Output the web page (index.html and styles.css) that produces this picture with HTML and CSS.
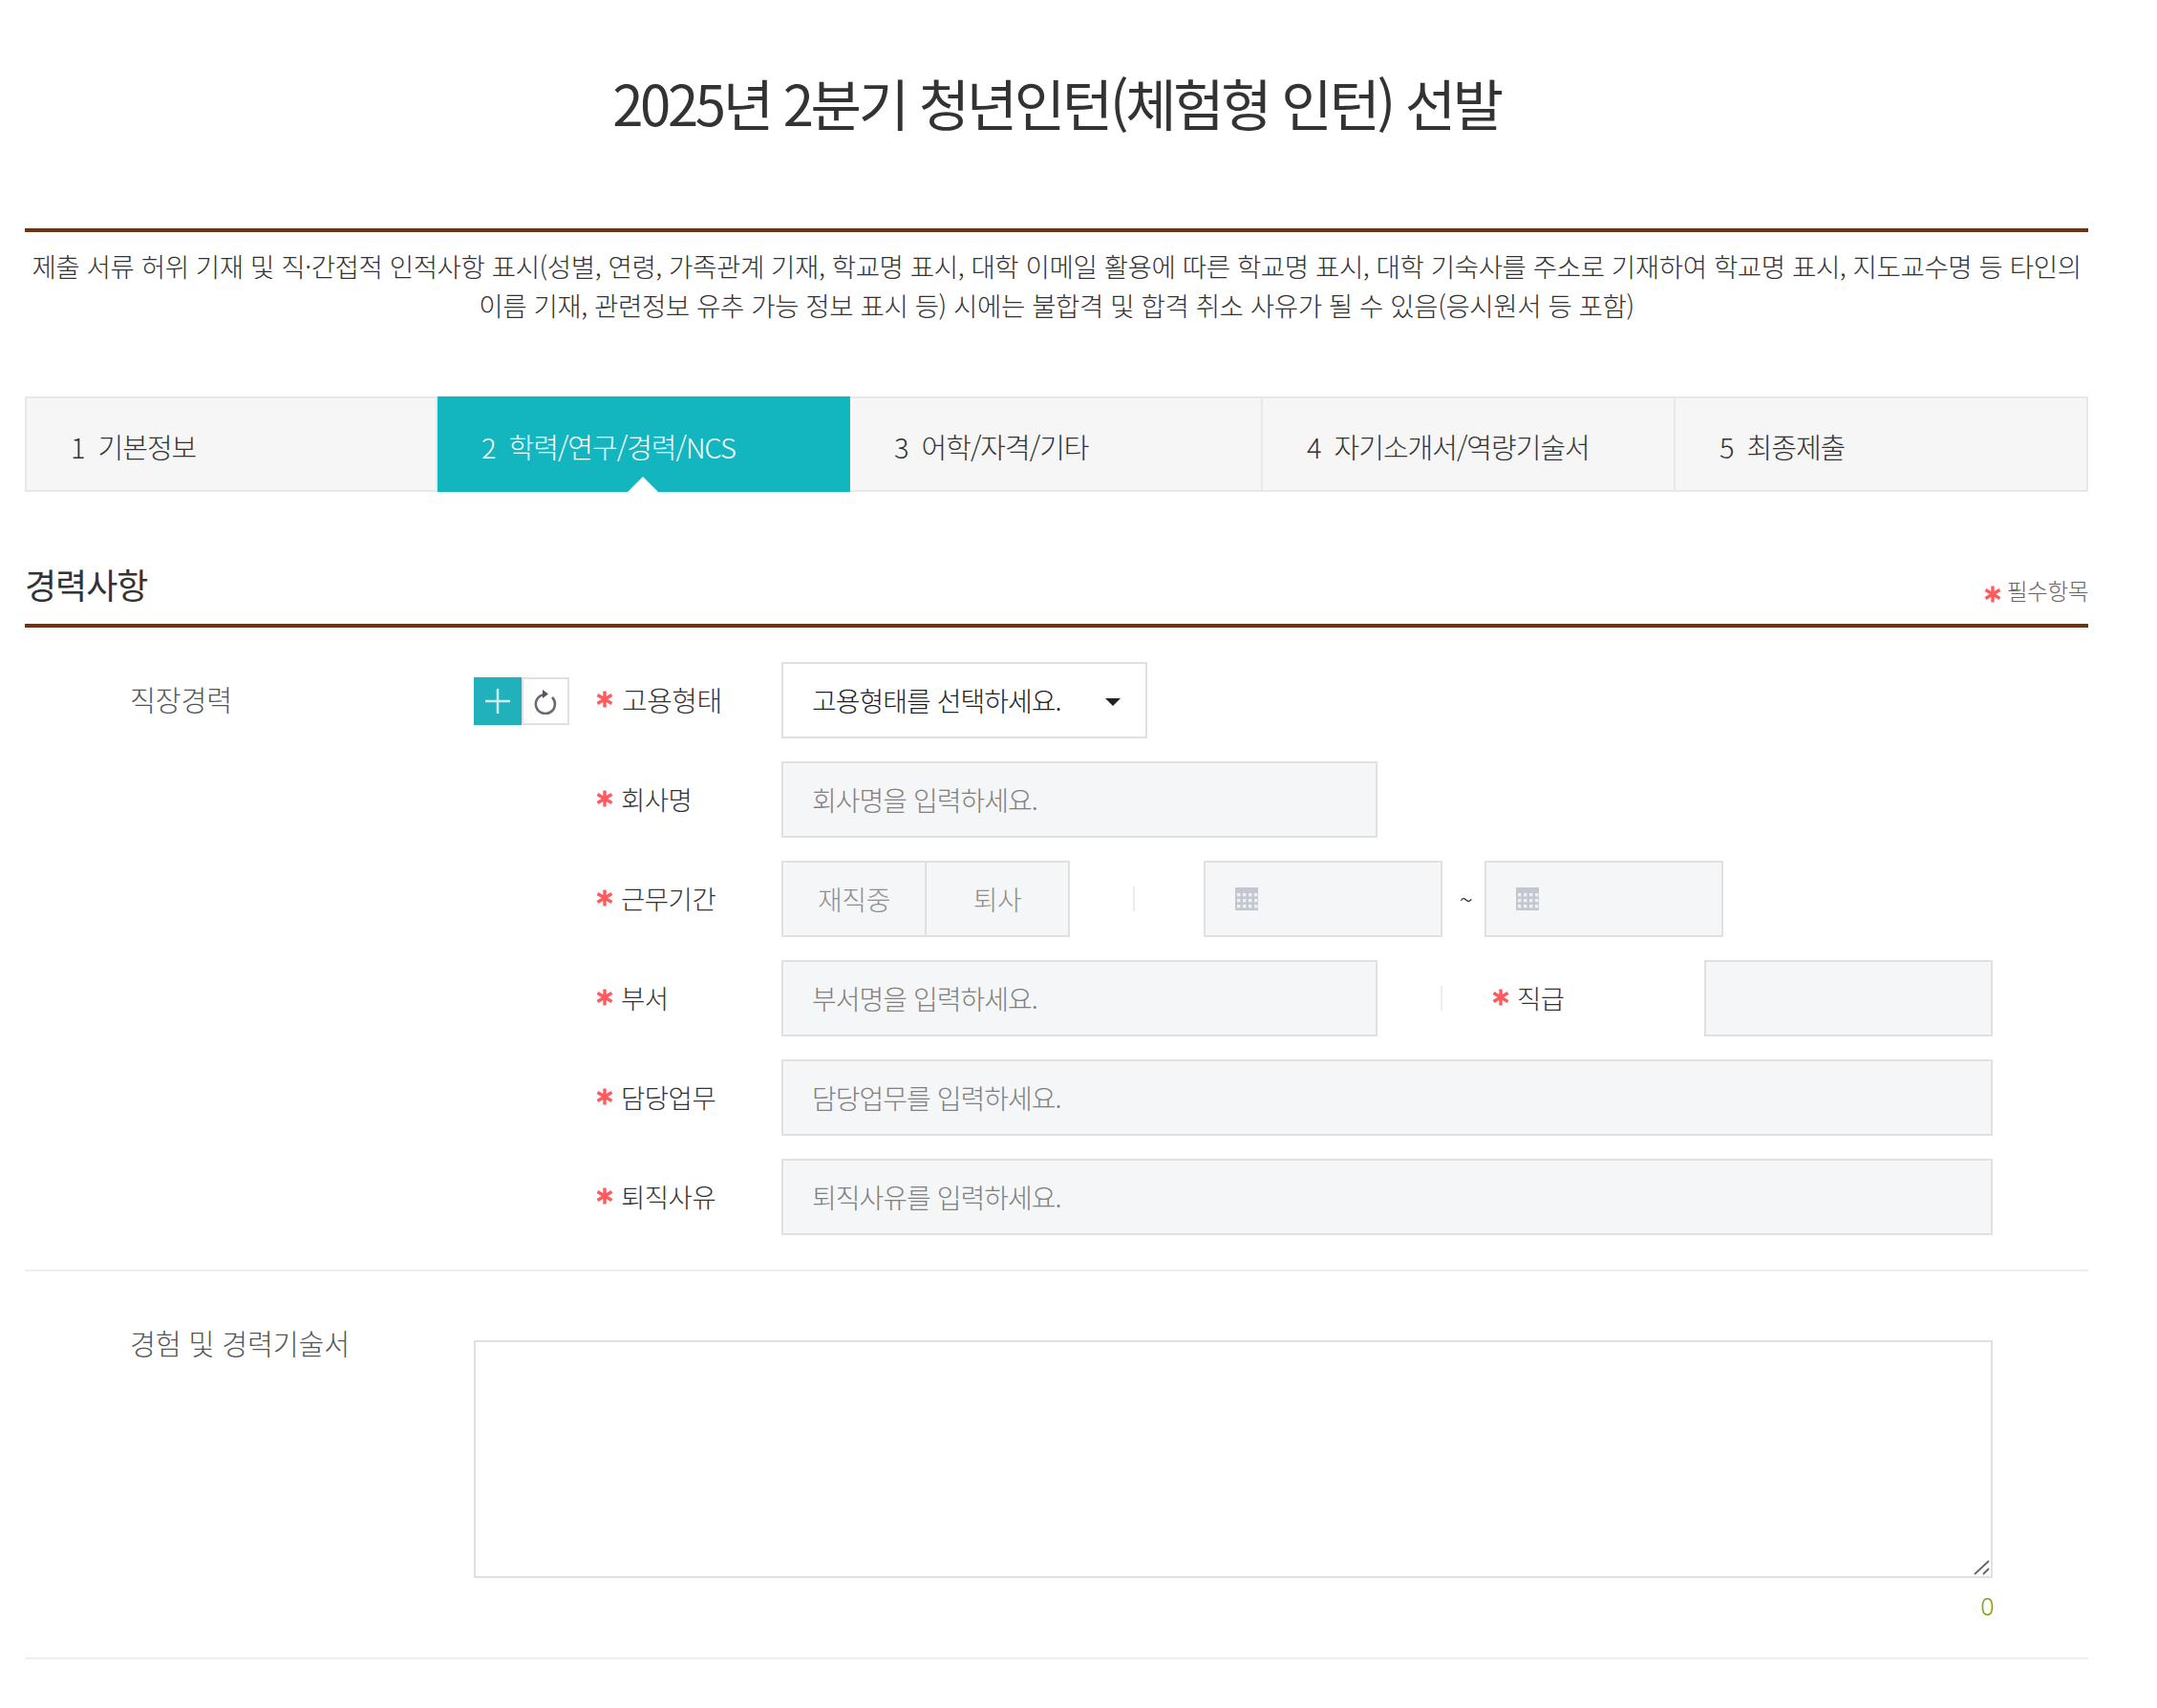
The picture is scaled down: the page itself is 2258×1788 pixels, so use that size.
FILE: index.html
```html
<!DOCTYPE html>
<html lang="ko">
<head>
<meta charset="utf-8">
<title>2025년 2분기 청년인턴(체험형 인턴) 선발</title>
<link rel="stylesheet" href="styles.css">
</head>
<body>
<svg class="defs" width="0" height="0" aria-hidden="true">
  <symbol id="star" viewBox="0 0 18 18">
    <g stroke="#ff5a5e" stroke-width="3.400" stroke-linecap="butt">
      <path d="M9 0.500V17.500M1.500 4.500L16.500 13.500M16.500 4.500L1.500 13.500"/>
    </g>
  </symbol>
  <symbol id="cal" viewBox="0 0 24 24">
    <rect width="24" height="24" fill="#c3c7cf"/>
    <g fill="#eef0f3">
      <rect x="2" y="6" width="3.400" height="3.400"/><rect x="8" y="6" width="3.400" height="3.400"/><rect x="14" y="6" width="3.400" height="3.400"/><rect x="20" y="6" width="3.400" height="3.400"/>
      <rect x="2" y="12" width="3.400" height="3.400"/><rect x="8" y="12" width="3.400" height="3.400"/><rect x="14" y="12" width="3.400" height="3.400"/><rect x="20" y="12" width="3.400" height="3.400"/>
      <rect x="2" y="18" width="3.400" height="3.400"/><rect x="8" y="18" width="3.400" height="3.400"/><rect x="14" y="18" width="3.400" height="3.400"/><rect x="20" y="18" width="3.400" height="3.400"/>
    </g>
  </symbol>
</svg>
<main class="page">
  <h1 class="title">2025년 2분기 청년인턴(체험형 인턴) 선발</h1>
  <p class="notice">제출 서류 허위 기재 및 직·간접적 인적사항 표시(성별, 연령, 가족관계 기재, 학교명 표시, 대학 이메일 활용에 따른 학교명 표시, 대학 기숙사를 주소로 기재하여 학교명 표시, 지도교수명 등 타인의 이름 기재, 관련정보 유추 가능 정보 표시 등) 시에는 불합격 및 합격 취소 사유가 될 수 있음(응시원서 등 포함)</p>

  <ol class="tabs">
    <li class="tab"><span class="tab-num">1</span>기본정보</li>
    <li class="tab tab-active"><span class="tab-num">2</span>학력/연구/경력/NCS</li>
    <li class="tab"><span class="tab-num">3</span>어학/자격/기타</li>
    <li class="tab"><span class="tab-num">4</span>자기소개서/역량기술서</li>
    <li class="tab"><span class="tab-num">5</span>최종제출</li>
  </ol>

  <header class="section-head">
    <h2 class="section-title">경력사항</h2>
    <span class="required"><svg class="star"><use href="#star"/></svg><span class="required-text">필수항목</span></span>
  </header>

  <section class="block block-career">
    <div class="block-label">직장경력</div>
    <div class="career">
      <div class="tools">
        <button class="tool tool-add" type="button" aria-label="추가">
          <svg width="26" height="26" viewBox="0 0 26 26"><path d="M13 0V26M0 13H26" stroke="#cdeef0" stroke-width="2.500"/></svg>
        </button>
        <button class="tool tool-reset" type="button" aria-label="초기화">
          <svg width="24" height="28" viewBox="0 0 24 28"><path d="M10 7.200A10 10 0 1 0 19 10" fill="none" stroke="#6a6a6a" stroke-width="2.600"/><path d="M9 2L15 6.500L9 11Z" fill="#555"/></svg>
        </button>
      </div>
      <div class="rows">
        <div class="row">
          <label class="label label-first"><svg class="star"><use href="#star"/></svg>고용형태</label>
          <div class="select"><span>고용형태를 선택하세요.</span><i class="caret"></i></div>
        </div>
        <div class="row">
          <label class="label"><svg class="star"><use href="#star"/></svg>회사명</label>
          <input class="input w-mid" placeholder="회사명을 입력하세요.">
        </div>
        <div class="row">
          <label class="label"><svg class="star"><use href="#star"/></svg>근무기간</label>
          <div class="toggle"><span>재직중</span><span>퇴사</span></div>
          <i class="sep sep-a"></i>
          <div class="date"><svg class="cal"><use href="#cal"/></svg></div>
          <span class="tilde">~</span>
          <div class="date"><svg class="cal"><use href="#cal"/></svg></div>
        </div>
        <div class="row">
          <label class="label"><svg class="star"><use href="#star"/></svg>부서</label>
          <input class="input w-mid" placeholder="부서명을 입력하세요.">
          <i class="sep sep-b"></i>
          <label class="label label-inner"><svg class="star"><use href="#star"/></svg>직급</label>
          <input class="input w-small">
        </div>
        <div class="row">
          <label class="label"><svg class="star"><use href="#star"/></svg>담당업무</label>
          <input class="input w-full" placeholder="담당업무를 입력하세요.">
        </div>
        <div class="row">
          <label class="label"><svg class="star"><use href="#star"/></svg>퇴직사유</label>
          <input class="input w-full" placeholder="퇴직사유를 입력하세요.">
        </div>
      </div>
    </div>
  </section>

  <section class="block block-essay">
    <div class="block-label">경험 및 경력기술서</div>
    <div class="essay">
      <div class="textarea-wrap">
        <textarea class="textarea"></textarea>
        <svg class="grip" width="17" height="16" viewBox="0 0 17 16"><path d="M1 15L16 1M10 15L16 9" stroke="#666" stroke-width="1.800" fill="none"/></svg>
      </div>
      <div class="counter">0</div>
    </div>
  </section>
</main>
</body>
</html>
```
FILE: styles.css
```css
* { box-sizing: border-box; }
html, body { margin: 0; padding: 0; background: #fff; }
body {
  font-family: "Noto Sans CJK KR", "Noto Sans", sans-serif;
  font-size: 28px;
  font-weight: 300;
  color: #333;
  letter-spacing: -0.5px;
}
.defs { position: absolute; }
.page { width: 2160px; margin: 0 26px; }

.title {
  margin: 0;
  height: 239px;
  padding-top: 69px;
  font-size: 58px;
  line-height: 76px;
  font-weight: 400;
  text-align: center;
  letter-spacing: -3.300px;
  color: #333;
}
.notice {
  margin: 0;
  height: 176px;
  border-top: 4px solid #6f3312;
  padding: 15px 0 0;
  font-size: 27.600px;
  line-height: 41px;
  letter-spacing: -0.450px;
  text-align: center;
  color: #333;
}

.tabs {
  display: grid;
  grid-template-columns: repeat(5, 1fr);
  margin: 0;
  padding: 0;
  list-style: none;
  height: 100px;
}
.tab {
  position: relative;
  display: flex;
  align-items: center;
  padding: 3px 0 0 46px;
  background: #f6f6f6;
  border: 2px solid #e8e8e8;
  border-left-width: 0;
  font-size: 29px;
  letter-spacing: -1px;
  color: #333;
}
.tab:first-child { border-left-width: 2px; }
.tab-num { margin-right: 14px; }
.tab-active {
  background: #13b5bf;
  border-color: #13b5bf;
  color: #fff;
}
.tab-active::after {
  content: "";
  position: absolute;
  left: 50%;
  bottom: -2px;
  margin-left: -16px;
  border: solid transparent;
  border-width: 0 16px 16px;
  border-bottom-color: #fff;
}

.section-head {
  display: flex;
  align-items: flex-end;
  justify-content: space-between;
  height: 142px;
  padding-bottom: 18px;
  border-bottom: 4px solid #6f3312;
}
.section-title {
  margin: 0;
  font-size: 36px;
  line-height: 48px;
  font-weight: 400;
  color: #333;
  letter-spacing: -1px;
}
.required {
  display: flex;
  align-items: center;
  font-size: 23.700px;
  line-height: 34px;
  color: #666;
  margin-bottom: -4px;
}
.required .star { margin-right: 6px; }
.required-text { position: relative; top: -4px; }

.star { width: 18px; height: 18px; flex: none; margin-right: 8px; }

.block { display: grid; grid-template-columns: 470px 1fr; }
.block-career { padding: 36px 0 36px; border-bottom: 2px solid #eee; height: 674px; }
.block-essay { padding-top: 72px; height: 406px; border-bottom: 2px solid #eee; }
.block-label {
  padding: 18px 0 0 110px;
  font-size: 29.300px;
  line-height: 40px;
  letter-spacing: -0.200px;
  color: #555;
}
.career { display: flex; align-items: flex-start; }
.tools { display: flex; width: 127px; flex: none; margin-top: 16px; }
.tool {
  width: 50px;
  height: 50px;
  padding: 0;
  display: flex;
  align-items: center;
  justify-content: center;
  border: 0;
  background: #21b1bd;
}
.tool-reset { background: #fff; border: 2px solid #e0e0e0; }

.rows { display: flex; flex-direction: column; gap: 24px; flex: 1; }
.row { display: flex; align-items: center; height: 80px; }
.label {
  width: 195px;
  flex: none;
  display: flex;
  align-items: center;
  padding: 0 0 2px 1px;
  font-size: 27.500px;
  line-height: 40px;
  color: #333;
}
.label-first { font-size: 29px; }
.label-first .star { margin-right: 9px; }
.label-inner { width: 222px; padding-left: 0; }

.select, .input, .date, .toggle, .textarea {
  border: 2px solid #e0e0e0;
  height: 80px;
  font-family: inherit;
  font-size: 28px;
  font-weight: inherit;
}
.select {
  width: 383px;
  display: flex;
  align-items: center;
  justify-content: space-between;
  padding: 0 26px 0 30px;
  letter-spacing: -1px;
  color: #222;
  background: #fff;
}
.caret {
  width: 0;
  height: 0;
  margin-top: 4px;
  border: solid transparent;
  border-width: 8px 8px 0;
  border-top-color: #222;
}
.input {
  padding: 0 30px;
  background: #f5f6f8;
  color: #333;
  letter-spacing: -1px;
  outline: 0;
}
.input::placeholder { color: #808080; opacity: 1; }
.w-mid { width: 624px; }
.w-small { width: 302px; }
.w-full { width: 1268px; }
.toggle {
  width: 302px;
  display: grid;
  grid-template-columns: 148px 1fr;
  background: #f5f6f8;
  color: #8f8f8f;
}
.toggle span { display: flex; align-items: center; justify-content: center; }
.toggle span + span { border-left: 2px solid #e0e0e0; }
.sep { display: block; width: 2px; height: 26px; background: #ececec; flex: none; }
.sep-a { margin: 0 72px 0 66px; }
.sep-b { margin: 0 52px 0 66px; }
.date {
  width: 250px;
  display: flex;
  align-items: center;
  padding-left: 31px;
  background: #f5f6f8;
}
.cal { width: 24px; height: 24px; }
.tilde { width: 44px; padding: 0 0 2px 5px; text-align: center; font-size: 26px; color: #333; }

.essay { min-width: 0; }
.block-essay .block-label { margin-top: -18px; padding-top: 0; }
.textarea-wrap { position: relative; width: 1590px; }
.textarea {
  display: block;
  width: 1590px;
  height: 249px;
  background: #fff;
  padding: 12px;
  outline: 0;
  resize: none;
}
.grip { position: absolute; right: 3px; bottom: 3px; }
.counter {
  width: 1591px;
  text-align: right;
  font-family: "Noto Sans", sans-serif;
  font-size: 25px;
  line-height: 32px;
  margin-top: 13px;
  color: #739a00;
}
```
